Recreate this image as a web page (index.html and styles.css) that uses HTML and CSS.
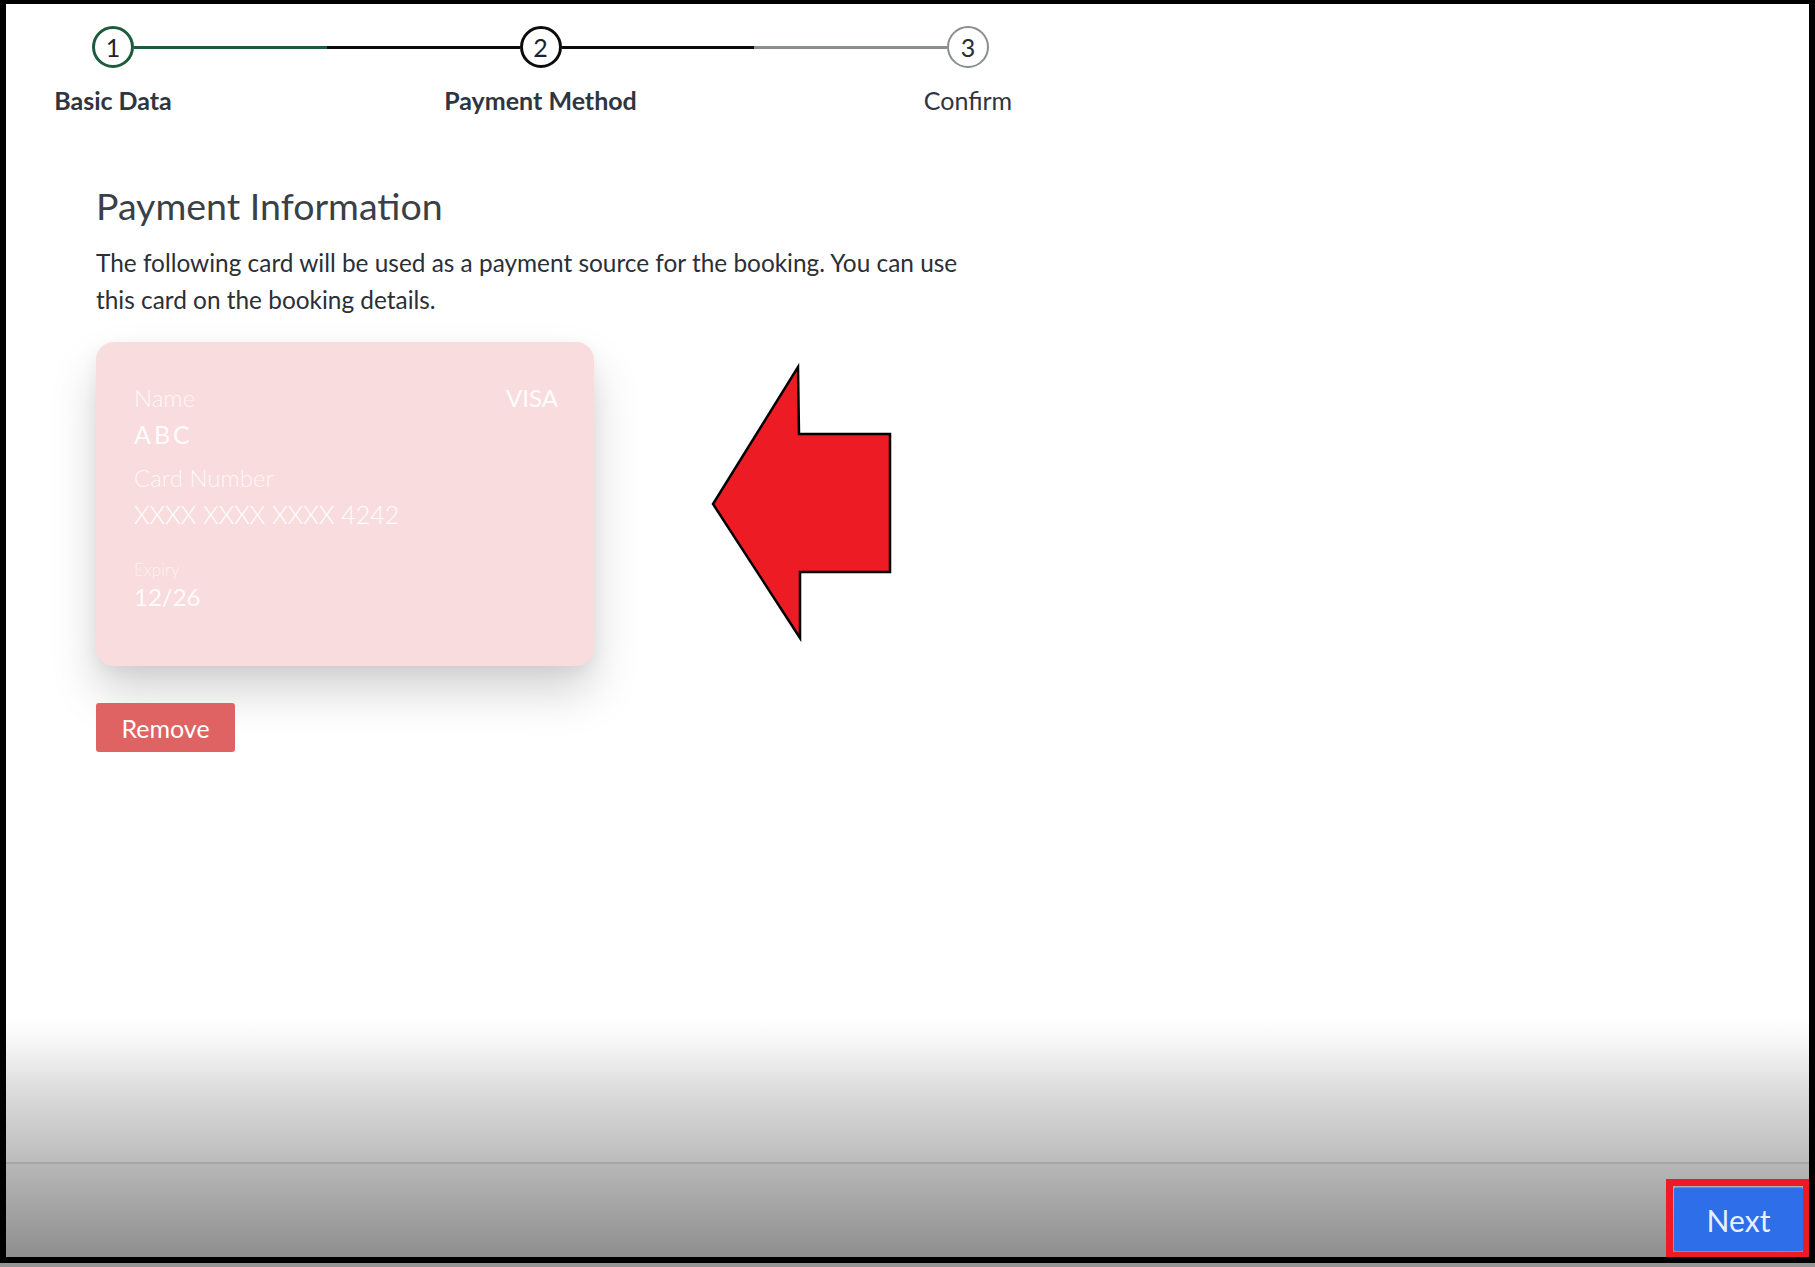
FILE: index.html
```html
<!DOCTYPE html>
<html lang="en">
<head>
<meta charset="utf-8">
<title>Payment Method</title>
<link rel="stylesheet" href="styles.css">
</head>
<body>
<div class="frame">
  <main class="main">
    <div class="stepper">
      <div class="step-col">
        <div class="circle done">1</div>
        <div class="label strong">Basic Data</div>
      </div>
      <div class="line line-a"></div>
      <div class="step-col">
        <div class="circle active">2</div>
        <div class="label strong">Payment Method</div>
      </div>
      <div class="line line-b"></div>
      <div class="step-col">
        <div class="circle todo">3</div>
        <div class="label">Confirm</div>
      </div>
    </div>

    <section class="content">
      <h1 class="title">Payment Information</h1>
      <p class="desc">The following card will be used as a payment source for the booking. You can use this card on the booking details.</p>

      <div class="card">
        <div class="card-top">
          <div class="c-label">Name</div>
          <div class="c-brand">VISA</div>
        </div>
        <div class="c-name">ABC</div>
        <div class="c-label c-gap">Card Number</div>
        <div class="c-number">XXXX XXXX XXXX 4242</div>
        <div class="c-small">Expiry</div>
        <div class="c-exp">12/26</div>
      </div>

      <button class="btn-remove" type="button">Remove</button>
    </section>

    <svg class="arrow" width="195" height="285" viewBox="0 0 195 285" aria-hidden="true">
      <polygon points="8,144 93,7 94,74 185,74 185,212 95,212 95,278" fill="#ed1c24" stroke="#000" stroke-width="2.5" stroke-linejoin="miter"/>
    </svg>
  </main>

  <footer class="footer">
    <div class="fade"></div>
    <div class="bar">
      <div class="highlight">
        <button class="btn-next" type="button">Next</button>
      </div>
    </div>
  </footer>
</div>
</body>
</html>
```

FILE: styles.css
```css
* { box-sizing: border-box; }

html, body {
  margin: 0;
  padding: 0;
}

body {
  background: #959595;
  font-family: "Lato", "Open Sans", "Liberation Sans", sans-serif;
  color: #2d323a;
  width: 1815px;
  height: 1267px;
  overflow: hidden;
}

.frame {
  width: 1815px;
  height: 1263px;
  border-style: solid;
  border-color: #000;
  border-width: 4px 6px 6px 6px;
  background: #fff;
  display: flex;
  flex-direction: column;
}

.main {
  flex: 1;
  display: flex;
  flex-direction: column;
}

/* Stepper */
.stepper {
  display: grid;
  grid-template-columns: 42px 1fr 42px 1fr 42px;
  width: 897px;
  margin: 22px 0 0 86px;
  align-items: start;
}

.step-col {
  display: flex;
  flex-direction: column;
  align-items: center;
  width: 42px;
}

.circle {
  width: 42px;
  height: 42px;
  border-radius: 50%;
  display: flex;
  align-items: center;
  justify-content: center;
  font-size: 25px;
  color: #1f2329;
  background: #fff;
}

.circle.done { border: 3px solid #1d5a3e; }
.circle.active { border: 3px solid #0c0c0c; }
.circle.todo { border: 2px solid #8a8d91; color: #2a2e33; }

.line {
  height: 3px;
  margin-top: 19.5px;
}

.line-a {
  background: linear-gradient(to right, #1d5a3e 0, #1d5a3e 50%, #0c0c0c 50%, #0c0c0c 100%);
}

.line-b {
  background: linear-gradient(to right, #0c0c0c 0, #0c0c0c 50%, #8a8d91 50%, #8a8d91 100%);
}

.label {
  margin-top: 17px;
  white-space: nowrap;
  font-size: 25px;
  line-height: 30px;
  color: #2f3540;
}

.label.strong { font-weight: 700; }

/* Content */
.content {
  padding-left: 90px;
  display: flex;
  flex-direction: column;
  align-items: flex-start;
}

.title {
  margin: 69px 0 0;
  font-size: 37.5px;
  font-weight: 400;
  line-height: 44px;
  color: #3a3f48;
}

.desc {
  margin: 16px 0 0;
  max-width: 890px;
  font-size: 24.4px;
  line-height: 37px;
  color: #2b2f36;
}

.card {
  margin-top: 24px;
  width: 498px;
  height: 324px;
  border-radius: 18px;
  background: #f9dcdd;
  padding: 37px 36px 0 38px;
  box-shadow: 0 26px 46px rgba(0, 0, 0, 0.17), 0 6px 16px rgba(0, 0, 0, 0.05);
  color: #fff;
}

.card-top {
  display: flex;
  justify-content: space-between;
}

.c-label {
  font-size: 24px;
  font-weight: 300;
  line-height: 37px;
  color: rgba(255, 255, 255, 0.82);
}

.c-gap { margin-top: 6px; }

.c-brand {
  font-size: 24px;
  line-height: 37px;
  color: rgba(255, 255, 255, 0.95);
}

.c-name {
  font-size: 25px;
  line-height: 37px;
  letter-spacing: 3px;
  color: rgba(255, 255, 255, 0.95);
}

.c-number {
  font-size: 25px;
  font-weight: 300;
  line-height: 37px;
  color: #fff;
}

.c-small {
  margin-top: 25px;
  font-size: 17px;
  font-weight: 300;
  line-height: 24px;
  color: rgba(255, 255, 255, 0.65);
}

.c-exp {
  font-size: 24px;
  line-height: 30px;
  color: rgba(255, 255, 255, 0.92);
}

.btn-remove {
  margin-top: 37px;
  width: 139px;
  height: 49px;
  border: 0;
  border-radius: 3px;
  background: #e06364;
  color: #fff;
  font-family: inherit;
  font-size: 25px;
  padding: 0;
}

/* Annotation arrow */
.arrow {
  position: absolute;
  left: 705px;
  top: 360px;
}

/* Footer */
.footer {
  display: flex;
  flex-direction: column;
}

.fade {
  height: 145px;
  background: linear-gradient(to bottom, #ffffff 0, #f6f6f6 18%, #d9d9d9 55%, #bcbcbc 100%);
}

.bar {
  height: 95px;
  border-top: 2px solid #a6a6a6;
  background: linear-gradient(to bottom, #b7b7b7 0, #8f8f8f 100%);
  display: flex;
  justify-content: flex-end;
  align-items: flex-end;
}

.highlight {
  width: 143px;
  height: 78px;
  border: 7px solid #ed1c24;
  border-bottom-width: 5px;
  border-right-width: 6px;
  padding: 1px 0 0 1px;
}

.btn-next {
  width: 129px;
  height: 64px;
  border: 0;
  border-top: 1px solid #5c8ff0;
  border-radius: 2px;
  background: #2e6fe9;
  color: #eaf0fd;
  font-family: inherit;
  font-size: 30px;
  padding: 0;
}
```
